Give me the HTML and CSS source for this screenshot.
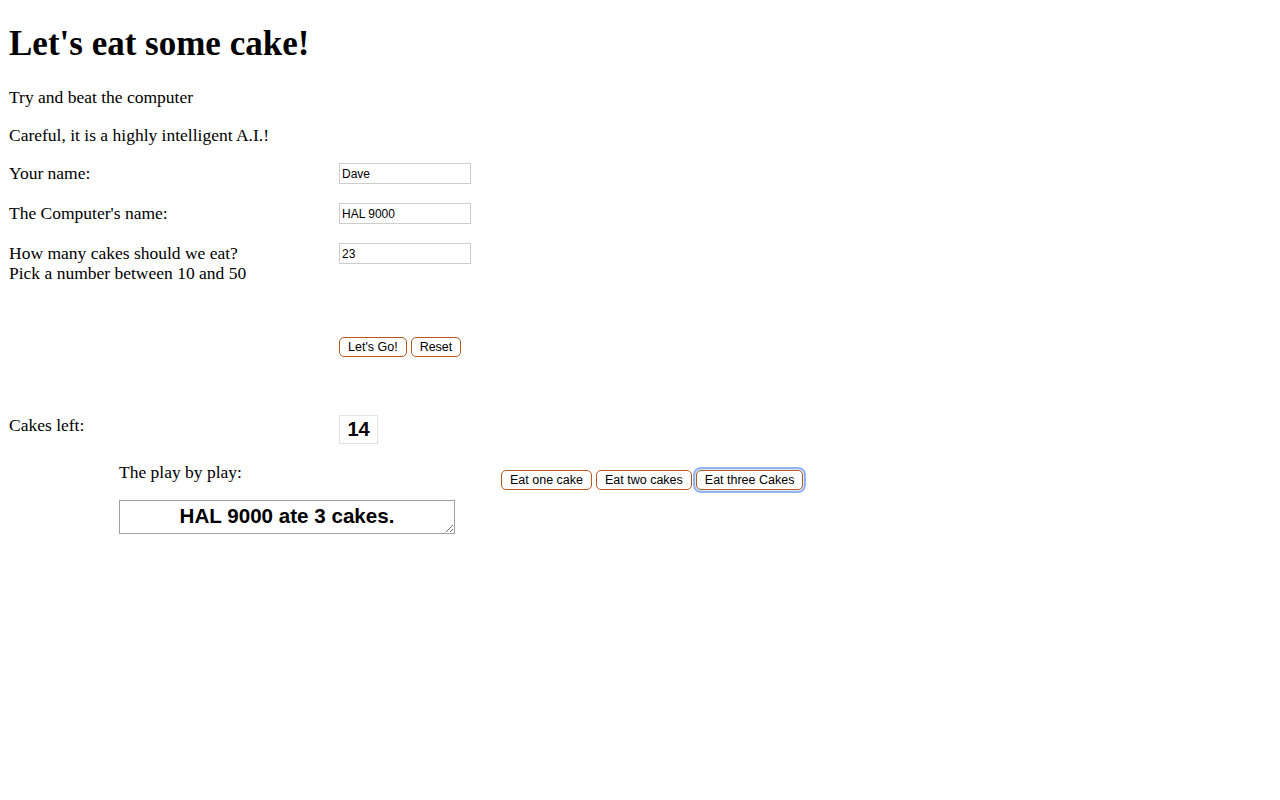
FILE: index.html
```html
<!DOCTYPE html>
<html>
<head>
<meta charset="utf-8">
<title>Let's eat some cake!</title>
<link rel="stylesheet" href="styles.css">
</head>
<body>
<div class="page">
  <h1 class="title">Let's eat some cake!</h1>
  <p class="intro">Try and beat the computer</p>
  <p class="intro">Careful, it is a highly intelligent A.I.!</p>

  <div class="row">
    <label class="label">Your name:</label>
    <input class="field" type="text" value="Dave">
  </div>
  <div class="row">
    <label class="label">The Computer's name:</label>
    <input class="field" type="text" value="HAL 9000">
  </div>
  <div class="row">
    <label class="label">How many cakes should we eat?<br>Pick a number between 10 and 50</label>
    <input class="field" type="text" value="23">
  </div>

  <div class="row actions">
    <span class="label"></span>
    <div class="btns">
      <button class="btn">Let's Go!</button>
      <button class="btn">Reset</button>
    </div>
  </div>

  <div class="row cakes">
    <span class="label">Cakes left:</span>
    <div class="count">14</div>
  </div>

  <div class="play">
    <div class="play-left">
      <div class="play-label">The play by play:</div>
      <textarea class="log">HAL 9000 ate 3 cakes.</textarea>
    </div>
    <div class="btns eat">
      <button class="btn">Eat one cake</button>
      <button class="btn">Eat two cakes</button>
      <button class="btn focused">Eat three Cakes</button>
    </div>
  </div>
</div>
</body>
</html>
```

FILE: styles.css
```css
html, body {
  margin: 0;
  padding: 0;
  background: #fff;
}

body {
  font-family: "Liberation Serif", "Times New Roman", serif;
  font-size: 17.5px;
  color: #000;
}

.page {
  padding: 24px 8px 0 9px;
}

.title {
  margin: 0;
  font-size: 35px;
  line-height: 40px;
  font-weight: bold;
}

.intro {
  margin: 23px 0 0 0;
  line-height: 20px;
}

.intro + .intro {
  margin-top: 18px;
}

.row {
  display: flex;
  align-items: flex-start;
  margin-top: 19px;
}

.intro + .row {
  margin-top: 18px;
}

.label {
  width: 330px;
  flex: none;
  line-height: 20px;
}

.field {
  box-sizing: border-box;
  width: 132px;
  height: 21px;
  margin: 0;
  padding: 1px 2px;
  border: 1px solid #cdcdcd;
  font-family: "Liberation Sans", Arial, sans-serif;
  font-size: 12px;
  color: #000;
  background: #fff;
  outline: none;
}

.row.actions {
  margin-top: 54px;
}

.btns {
  display: flex;
  gap: 4px;
}

.btn {
  box-sizing: border-box;
  height: 20px;
  margin: 0;
  padding: 0 8px;
  border: 1px solid #b8581e;
  border-radius: 5px;
  background: #fff;
  font-family: "Liberation Sans", Arial, sans-serif;
  font-size: 12.5px;
  color: #000;
  line-height: 18px;
}

.btn.focused {
  box-shadow: 0 0 0 1px #dce8fc, 0 0 0 3px #8fb3f3;
}

.row.cakes {
  margin-top: 57px;
}

.row.cakes .label {
  margin-top: 1px;
}

.count {
  box-sizing: border-box;
  width: 39px;
  height: 29px;
  margin-top: 1px;
  border: 1px solid #e2e2e2;
  font-family: "Liberation Sans", Arial, sans-serif;
  font-weight: bold;
  font-size: 20px;
  line-height: 27px;
  text-align: center;
}

.play {
  display: flex;
  align-items: flex-start;
  margin-top: 18px;
  padding-left: 110px;
}

.play-left {
  width: 382px;
  flex: none;
}

.play-label {
  line-height: 20px;
}

.log {
  display: block;
  box-sizing: border-box;
  width: 336px;
  height: 34px;
  margin: 18px 0 0 0;
  padding: 2px;
  border: 1px solid #a0a0a0;
  font-family: "Liberation Sans", Arial, sans-serif;
  font-weight: bold;
  font-size: 20.6px;
  line-height: 26px;
  text-align: center;
  color: #000;
  overflow: hidden;
  resize: both;
}

.eat {
  margin-top: 8px;
}
```
